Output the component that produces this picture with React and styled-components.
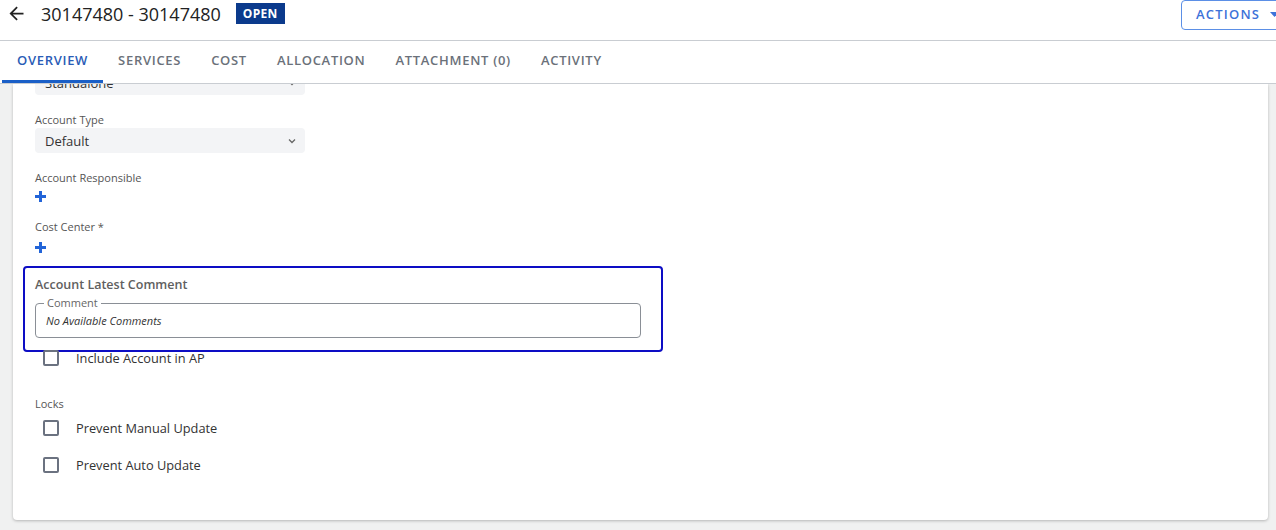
import React from "react";
import styled, { createGlobalStyle } from "styled-components";

const GlobalStyle = createGlobalStyle`
  html, body {
    margin: 0;
    padding: 0;
    background: #f0f1f1;
    font-family: "Open Sans", "Liberation Sans", sans-serif;
    color: #333;
  }
  #root {
    height: 530px;
    overflow: hidden;
  }
`;

const BackIcon = () => (
  <svg width="21" height="21" viewBox="0 0 24 24">
    <path fill="#222" d="M20 11H7.83l5.59-5.59L12 4l-8 8 8 8 1.41-1.41L7.83 13H20v-2z" />
  </svg>
);

const PlusIcon = () => (
  <svg width="11" height="11" viewBox="0 0 11 11">
    <path fill="#2264d8" d="M4 0h3v4h4v3H7v4H4V7H0V4h4z" />
  </svg>
);

const Chevron = () => (
  <svg width="8" height="6" viewBox="0 0 8 6">
    <path d="M1 1.5l3 3 3-3" fill="none" stroke="#666" strokeWidth="1.3" />
  </svg>
);

const Caret = () => (
  <svg width="9" height="5" viewBox="0 0 9 5">
    <path d="M0 0h9L4.5 5z" fill="#3d72d9" />
  </svg>
);

const tabs = ["OVERVIEW", "SERVICES", "COST", "ALLOCATION", "ATTACHMENT (0)", "ACTIVITY"];

const App = () => {
  return (
    <>
      <GlobalStyle />
      <Page>
        <Header>
          <BackButton>
            <BackIcon />
          </BackButton>
          <Title>30147480 - 30147480</Title>
          <Badge>OPEN</Badge>
          <ActionsButton>
            ACTIONS
            <Caret />
          </ActionsButton>
        </Header>
        <TabBar>
          {tabs.map((t, i) => (
            <Tab key={t} $active={i === 0}>
              {t}
            </Tab>
          ))}
        </TabBar>
        <Body>
          <Card>
            <Select $clipped>
              <span>Standalone</span>
              <Chevron />
            </Select>

            <Label $top={17}>Account Type</Label>
            <Select>
              <span>Default</span>
              <Chevron />
            </Select>

            <Label $top={17}>Account Responsible</Label>
            <AddButton $top={5}>
              <PlusIcon />
            </AddButton>

            <Label $top={17}>Cost Center *</Label>
            <AddButton $top={7}>
              <PlusIcon />
            </AddButton>

            <CommentBox>
              <BoxTitle>Account Latest Comment</BoxTitle>
              <CommentField>
                <Legend>Comment</Legend>
                <CommentText>No Available Comments</CommentText>
              </CommentField>
            </CommentBox>

            <CheckRow $top={-3}>
              <CheckBox />
              <CheckLabel>Include Account in AP</CheckLabel>
            </CheckRow>

            <SmallLabel>Locks</SmallLabel>
            <CheckRow $top={7}>
              <CheckBox />
              <CheckLabel>Prevent Manual Update</CheckLabel>
            </CheckRow>
            <CheckRow $top={19}>
              <CheckBox />
              <CheckLabel>Prevent Auto Update</CheckLabel>
            </CheckRow>
          </Card>
        </Body>
      </Page>
    </>
  );
};

export default App;

const Page = styled.div`
  display: flex;
  flex-direction: column;
  height: 530px;
  background: #f0f1f1;
`;

const Header = styled.div`
  display: flex;
  align-items: flex-start;
  height: 40px;
  background: #fff;
  border-bottom: 1px solid #c9cdd2;
  box-sizing: content-box;
`;

const BackButton = styled.div`
  display: flex;
  width: 21px;
  height: 21px;
  margin: 3px 0 0 6px;
`;

const Title = styled.div`
  margin: 2px 0 0 14px;
  font-size: 18px;
  line-height: 25px;
  color: #222;
`;

const Badge = styled.div`
  margin: 3px 0 0 15px;
  height: 21px;
  padding: 0 7px;
  background: #0b3a8c;
  color: #fff;
  font-size: 12px;
  font-weight: 700;
  line-height: 21px;
  letter-spacing: 0.3px;
`;

const ActionsButton = styled.div`
  margin-left: auto;
  margin-right: -12px;
  height: 30px;
  width: 107px;
  box-sizing: border-box;
  border: 1px solid #5b8fe6;
  border-radius: 4px;
  display: flex;
  align-items: center;
  gap: 10px;
  padding: 0 0 2px 14px;
  color: #3d72d9;
  font-size: 13px;
  font-weight: 600;
  letter-spacing: 1.2px;
`;

const TabBar = styled.div`
  display: flex;
  height: 42px;
  padding-left: 2px;
  background: #fff;
  border-bottom: 1px solid #c9cdd2;
  box-sizing: content-box;
`;

const Tab = styled.div`
  display: flex;
  align-items: center;
  padding: 0 15px 5px;
  font-size: 13px;
  font-weight: 600;
  letter-spacing: 0.7px;
  color: ${({ $active }) => ($active ? "#2a5cb6" : "#6b717a")};
  box-shadow: ${({ $active }) => ($active ? "inset 0 -3px 0 #1a5fc7" : "none")};
`;

const Body = styled.div`
  flex: 1;
  overflow: hidden;
  padding: 0 8px 10px 13px;
`;

const Card = styled.div`
  height: 100%;
  box-sizing: border-box;
  background: #fff;
  border-radius: 0 0 4px 4px;
  box-shadow: 0 1px 3px rgba(0, 0, 0, 0.25);
  padding: 0 0 0 22px;
  display: flex;
  flex-direction: column;
  align-items: flex-start;
`;

const Select = styled.div`
  width: 270px;
  height: 25px;
  margin-top: ${({ $clipped }) => ($clipped ? "-14px" : "0")};
  box-sizing: border-box;
  background: #f3f4f6;
  border-radius: 4px;
  display: flex;
  align-items: center;
  justify-content: space-between;
  padding: 0 9px 0 10px;
  font-size: 13px;
  color: #333;
`;

const Label = styled.div`
  margin-top: ${({ $top }) => $top}px;
  font-size: 11px;
  line-height: 16px;
  color: #555;
`;

const AddButton = styled.div`
  margin-top: ${({ $top }) => $top}px;
  display: flex;
  height: 11px;
`;

const CommentBox = styled.div`
  margin: 13px 0 0 -12px;
  width: 640px;
  height: 86px;
  box-sizing: border-box;
  border: 2px solid #0d0dc4;
  border-radius: 4px;
  padding: 8px 20px 0 10px;
  display: flex;
  flex-direction: column;
`;

const BoxTitle = styled.div`
  font-size: 12.5px;
  font-weight: 600;
  line-height: 18px;
  color: #606060;
`;

const CommentField = styled.fieldset`
  margin: 3px 0 0;
  padding: 4px 8px 9px;
  border: 1px solid #8a8f96;
  border-radius: 4px;
  min-width: 0;
`;

const Legend = styled.legend`
  font-size: 11px;
  line-height: 12px;
  color: #666;
  padding: 0 3px;
`;

const CommentText = styled.div`
  font-size: 11px;
  font-style: italic;
  line-height: 15px;
  color: #333;
  margin-left: 2px;
`;

const CheckRow = styled.div`
  margin-top: ${({ $top }) => $top}px;
  display: flex;
  align-items: center;
  gap: 17px;
  padding-left: 8px;
`;

const CheckBox = styled.div`
  width: 16px;
  height: 16px;
  box-sizing: border-box;
  border: 2px solid #6b7280;
  border-radius: 2px;
`;

const CheckLabel = styled.div`
  font-size: 12.8px;
  color: #333;
`;

const SmallLabel = styled.div`
  margin-top: 29px;
  font-size: 11px;
  line-height: 16px;
  color: #555;
`;
